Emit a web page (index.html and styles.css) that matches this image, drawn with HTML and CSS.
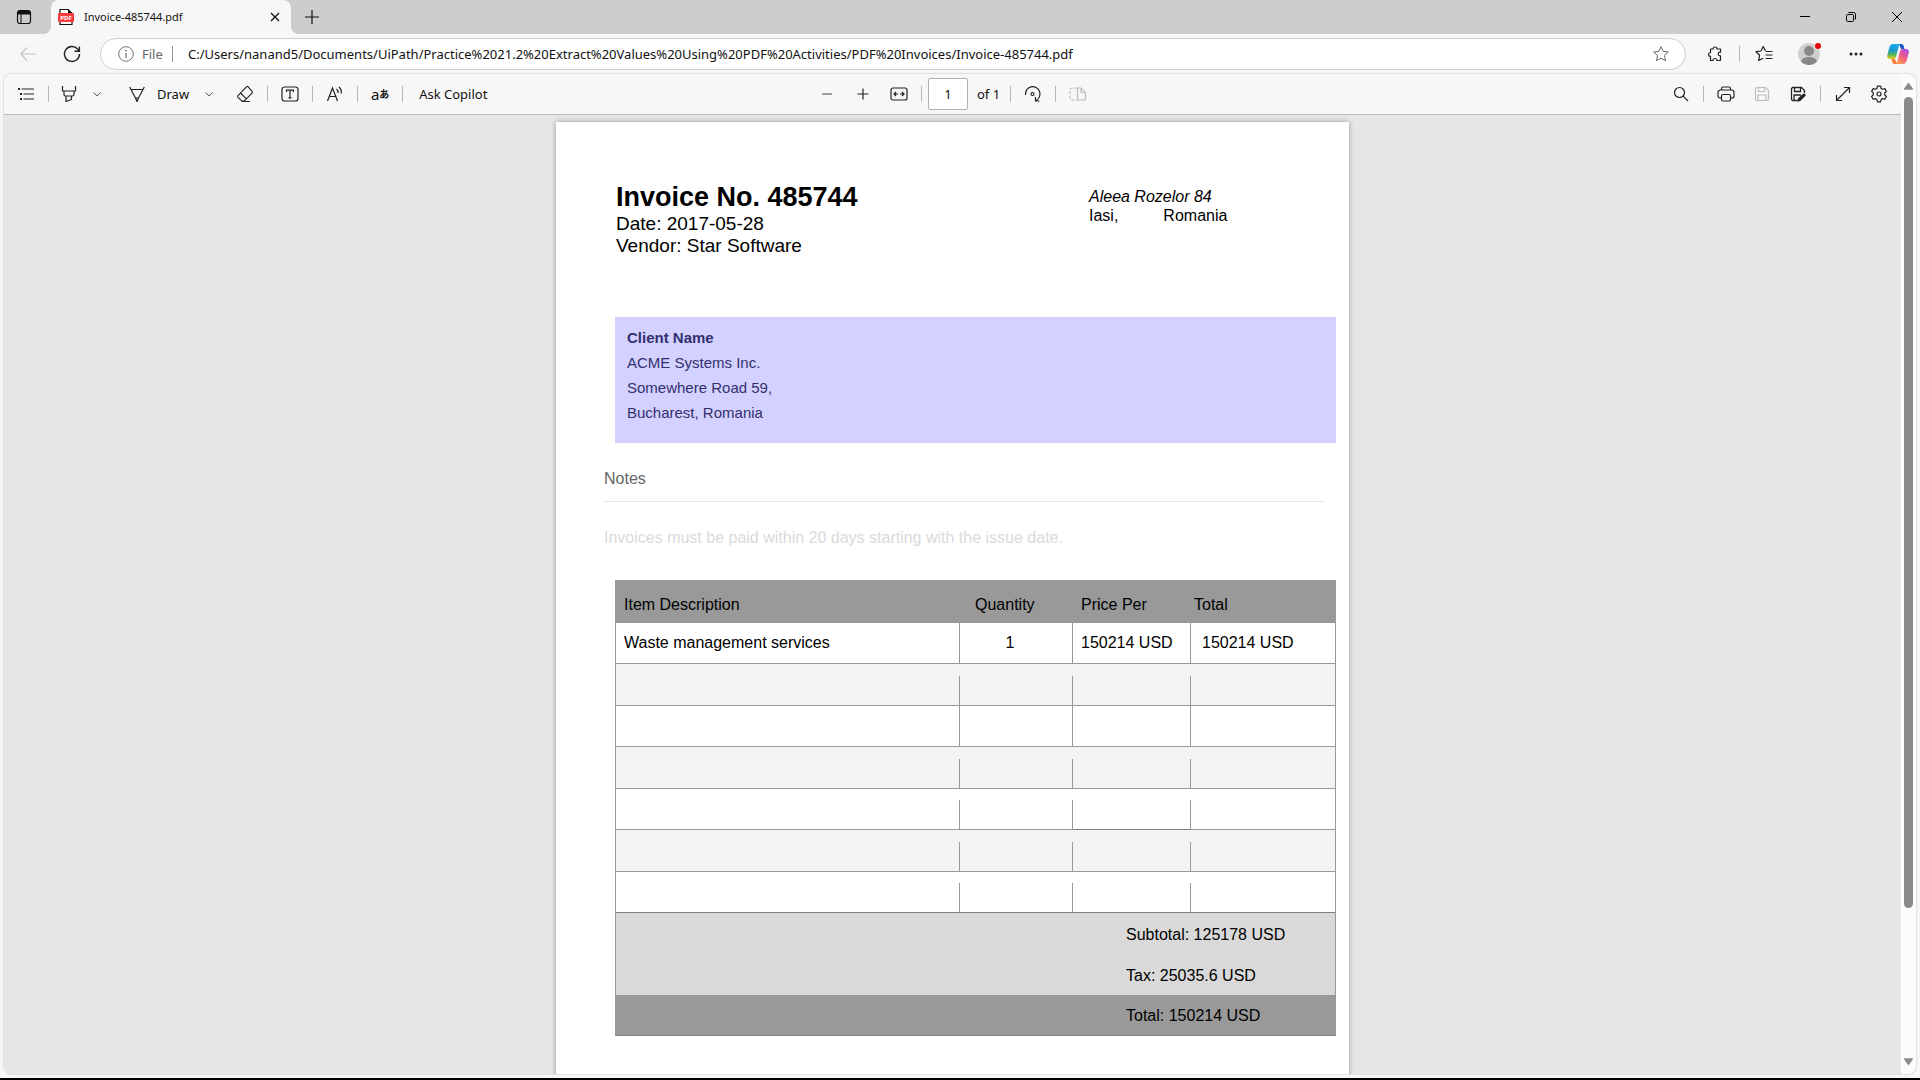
FILE: index.html
```html
<!DOCTYPE html>
<html lang="en">
<head>
<meta charset="utf-8">
<title>Invoice-485744.pdf</title>
<link rel="stylesheet" href="styles.css">
</head>
<body>
<div class="browser">
  <header class="tabstrip">
    <button class="tab-actions" aria-label="Tab actions">
      <svg width="16" height="16" viewBox="0 0 16 16"><rect x="1.5" y="1.5" width="13" height="13" rx="2.5" fill="none" stroke="#111" stroke-width="1.2"/><path d="M1.5 5.500V4A2.500 2.500 0 0 1 4 1.500h8A2.500 2.500 0 0 1 14.500 4v1.500z" fill="#111"/><path d="M5 5v9.500" stroke="#111"/></svg>
    </button>
    <div class="tab">
      <svg width="16" height="18" viewBox="0 0 16 18"><path d="M2 6V1.500h8L14 5.500V6M2 13v3.500h12V13" fill="#fff" stroke="#111" stroke-width="1.200"/><path d="M10 1v5h5z" fill="#111"/><rect x="0" y="5" width="16" height="9" rx="1" fill="#fb3b3b"/><text x="8" y="11.700" text-anchor="middle" class="pdf-badge">PDF</text></svg>
      <span class="tab-title">Invoice-485744.pdf</span>
      <button class="tab-close" aria-label="Close tab"><svg width="10" height="10" viewBox="0 0 10 10"><path d="M1 1l8 8M9 1L1 9" stroke="#111" stroke-width="1.300"/></svg></button>
    </div>
    <button class="new-tab" aria-label="New tab"><svg width="14" height="14" viewBox="0 0 14 14"><path d="M7 0v14M0 7h14" stroke="#111" stroke-width="1.200"/></svg></button>
    <div class="window-controls">
      <button aria-label="Minimize"><svg width="10" height="10" viewBox="0 0 10 10"><path d="M0 4.500h10" stroke="#000"/></svg></button>
      <button aria-label="Restore"><svg width="10" height="10" viewBox="0 0 10 10" fill="none" stroke="#000"><rect x=".5" y="2.500" width="7" height="7" rx="1.200"/><path d="M2.500.5H7.500a2 2 0 0 1 2 2V7.500"/></svg></button>
      <button aria-label="Close"><svg width="10" height="10" viewBox="0 0 10 10"><path d="M0 0l10 10M10 0L0 10" stroke="#000"/></svg></button>
    </div>
  </header>

  <nav class="navbar">
    <button class="nav-back" aria-label="Back" disabled><svg width="16" height="14" viewBox="0 0 16 14" fill="none" stroke="#c4c4c4" stroke-width="1.200"><path d="M7 .5L.8 7 7 13.500M1 7h15"/></svg></button>
    <button class="nav-reload" aria-label="Refresh"><svg width="18" height="18" viewBox="0 0 18 18" fill="none" stroke="#222" stroke-width="1.400"><path d="M16.500 9A7.500 7.500 0 1 1 14.600 4L16.300 6"/><path d="M16.400 1.500V6.300H11.500"/></svg></button>
    <div class="address">
      <svg width="16" height="16" viewBox="0 0 16 16" fill="none" stroke="#777"><circle cx="8" cy="8" r="7.300"/><path d="M8 7v5" stroke-width="1.300"/><circle cx="8" cy="4.800" r=".5" fill="#777"/></svg>
      <span class="scheme">File</span>
      <span class="address-sep"></span>
      <input class="url" type="text" aria-label="Address" value="C:/Users/nanand5/Documents/UiPath/Practice%2021.2%20Extract%20Values%20Using%20PDF%20Activities/PDF%20Invoices/Invoice-485744.pdf">
      <button class="icon-button" aria-label="Add to favorites"><svg width="16" height="16" viewBox="0 0 16 16" fill="none" stroke="#666" stroke-linejoin="round"><path d="M8 .7l2.200 4.700 5.100.6-3.800 3.500 1 5.200L8 12.200l-4.500 2.500 1-5.200L.7 6l5.100-.6z"/></svg></button>
    </div>
    <div class="nav-tools">
      <button class="icon-button" aria-label="Extensions"><svg width="16" height="16" viewBox="0 0 16 16" fill="none" stroke="#222" stroke-width="1.200" stroke-linejoin="round"><path d="M3.500 3H6a2 2 0 0 1 4 0h3.500v3.200H13a1.800 1.800 0 0 0 0 3.600h.5V14.500H10a2 2 0 0 0-4 0H3.500V10.300a1.900 1.900 0 0 1 0-3.800z"/></svg></button>
      <span class="sep"></span>
      <button class="icon-button" aria-label="Favorites"><svg width="18" height="18" viewBox="0 0 18 18" fill="none" stroke="#222" stroke-width="1.200" stroke-linejoin="round"><path d="M10.500 6L8.200 1.500 6 6l-5 .7 3.600 3.500-.9 5.300 4.500-2.300M11 6.500h6.500M10.500 10H17.500M10.500 13.500h7"/></svg></button>
      <button class="avatar" aria-label="Profile"><svg width="24" height="24" viewBox="0 0 24 24"><circle cx="11" cy="12" r="11" fill="#d2d0ce"/><circle cx="11" cy="9" r="5" fill="#8a8886"/><path d="M3 19.500c1-3.500 4-4.500 8-4.500s7 1 8 4.500a11 11 0 0 1-16 0z" fill="#8a8886"/><circle cx="20" cy="4" r="3.500" fill="#f7f7f7"/><circle cx="20" cy="4" r="3" fill="#e8000b"/></svg></button>
      <button class="icon-button" aria-label="Settings and more"><svg width="14" height="4" viewBox="0 0 14 4" fill="#222"><circle cx="2" cy="2" r="1.500"/><circle cx="7" cy="2" r="1.500"/><circle cx="12" cy="2" r="1.500"/></svg></button>
      <button class="copilot" aria-label="Copilot"><svg width="22" height="20" viewBox="0 0 22 20">
        <defs>
          <linearGradient id="cool" x1="0" y1="0" x2="0" y2="1"><stop offset="0" stop-color="#1aa9f0"/><stop offset=".4" stop-color="#189ad6"/><stop offset=".7" stop-color="#52b45c"/><stop offset="1" stop-color="#f4cc16"/></linearGradient>
          <linearGradient id="warm" x1="1" y1="0" x2=".3" y2="1"><stop offset="0" stop-color="#9a4cf5"/><stop offset=".5" stop-color="#ec5790"/><stop offset="1" stop-color="#ff9a4a"/></linearGradient>
        </defs>
        <path d="M12 0h2.500c1.300 0 1.900 1 2.300 2.400L17.500 5H14z" fill="#1854c8"/>
        <path d="M6 0h7.500c-1 .5-1.500 1.500-1.900 3L9.300 12c-.7 2.300-1.500 3-3 3H3C.8 15-.3 13.500.3 11.200L2.400 3.300C3 1.300 4 0 6 0z" fill="url(#cool)"/>
        <path d="M16 20H8.500c1-.5 1.500-1.500 1.900-3l2.300-9c.7-2.300 1.500-3 3-3H19c2.200 0 3.300 1.500 2.700 3.800l-2.100 7.900C19 18.700 18 20 16 20z" fill="url(#warm)"/>
        <path d="M10 20H7.500c-1.300 0-1.900-1-2.300-2.400L4.500 15H8z" fill="#f57a3c"/>
      </svg></button>
    </div>
  </nav>

  <main class="viewer">
    <div class="viewer-main">
      <div class="toolbar">
        <div class="group group-left">
          <button class="icon-button" aria-label="Contents"><svg width="18" height="14" viewBox="0 0 18 14" fill="none" stroke="#222" stroke-width="1.200"><path d="M4.500 2H17M6.500 7H17M6.500 12H17"/><path d="M1 2h2M3 7h2M3 12h2" stroke-width="2"/></svg></button>
          <span class="sep"></span>
          <button class="icon-button narrow" aria-label="Highlight"><svg width="16" height="18" viewBox="0 0 16 18" fill="none" stroke="#222" stroke-width="1.200" stroke-linejoin="round"><path d="M1.500 1v5h13V1M3 6v3.500c0 1 .5 1.500 1.500 1.500h7c1 0 1.500-.5 1.500-1.500V6M5 11v5.500l5.500-2V11"/></svg></button>
          <button class="icon-button narrow" aria-label="Highlight colors"><svg width="8" height="5" viewBox="0 0 8 5" fill="none" stroke="#555"><path d="M.5.5L4 4 7.500.5"/></svg></button>
          <button class="draw" type="button"><svg width="16" height="16" viewBox="0 0 16 16" fill="none" stroke="#222" stroke-width="1.200" stroke-linejoin="round"><path d="M.7 1L2 3.500h12L15.300 1M2 3.500L6.500 12h3L14 3.500M6.500 12L8 15.500 9.500 12"/></svg><span>Draw</span></button>
          <button class="icon-button narrow" aria-label="Draw options"><svg width="8" height="5" viewBox="0 0 8 5" fill="none" stroke="#555"><path d="M.5.5L4 4 7.500.5"/></svg></button>
          <button class="icon-button eraser" aria-label="Erase"><svg width="18" height="18" viewBox="0 0 18 18" fill="none" stroke="#222" stroke-width="1.100" stroke-linejoin="round"><path d="M10.700 1.700L1.800 10.800a1 1 0 0 0 0 1.300l4 4h2.400l8-8.200a1 1 0 0 0 0-1.300L12 1.700a1 1 0 0 0-1.300 0zM4.500 8l5.800 5.800M6 16.500h8"/></svg></button>
          <span class="sep"></span>
          <button class="icon-button" aria-label="Add text"><svg width="18" height="16" viewBox="0 0 18 16" fill="none" stroke="#222" stroke-width="1.200"><rect x="1" y="1" width="16" height="14" rx="2.500"/><path d="M5.500 6V4.200h7V6M9 4.200v7.600M7.500 11.800h3"/></svg></button>
          <span class="sep"></span>
          <button class="icon-button" aria-label="Read aloud"><svg width="18" height="16" viewBox="0 0 18 16" fill="none" stroke="#222" stroke-width="1.200"><path d="M1.500 15L6.500 2l5 13M3.300 10.500h6.500M10.500 3a4 4 0 0 1 1.500 4M13 1a7 7 0 0 1 2.200 6.500"/></svg></button>
          <span class="sep"></span>
          <button class="icon-button translate" aria-label="Translate"><span>a</span><span class="kana">あ</span></button>
          <span class="sep"></span>
          <button class="ask" type="button">Ask Copilot</button>
        </div>
        <div class="group group-center">
          <button class="icon-button" aria-label="Zoom out"><svg width="12" height="12" viewBox="0 0 12 12"><path d="M1 6h10" stroke="#444" stroke-width="1.200"/></svg></button>
          <button class="icon-button spaced" aria-label="Zoom in"><svg width="12" height="12" viewBox="0 0 12 12"><path d="M.5 6h11M6 .5v11" stroke="#222" stroke-width="1.200"/></svg></button>
          <button class="icon-button spaced" aria-label="Fit to width"><svg width="18" height="14" viewBox="0 0 18 14" fill="none" stroke="#222" stroke-width="1.200"><rect x="1" y="1" width="16" height="12" rx="2"/><path d="M8 7H4M6 5L4 7l2 2M10 7h4M12 5l2 2-2 2"/></svg></button>
          <span class="sep"></span>
          <input class="page-number" id="page-number" type="text" value="1">
          <label class="page-count" for="page-number">of 1</label>
          <span class="sep"></span>
          <button class="icon-button" aria-label="Rotate"><svg width="18" height="18" viewBox="0 0 18 18" fill="none" stroke="#222" stroke-width="1.200"><path d="M1.500 10A7.300 7.300 0 1 1 12 15.500M15.500 16H11.500V12"/><circle cx="8.500" cy="9" r="1.500"/></svg></button>
          <span class="sep"></span>
          <button class="icon-button" aria-label="Page view" disabled><svg width="18" height="14" viewBox="0 0 18 14" fill="none" stroke="#bdbdbd" stroke-width="1.200"><path d="M8 1H3a2 2 0 0 0-2 2v8a2 2 0 0 0 2 2h5" stroke-dasharray="3 1.500"/><path d="M8.500 1H12l4.500 4.500V11a2 2 0 0 1-2 2h-6zM12 1v4.500h4.500"/></svg></button>
        </div>
        <div class="group group-right">
          <button class="icon-button" aria-label="Search"><svg width="16" height="16" viewBox="0 0 16 16" fill="none" stroke="#222" stroke-width="1.200"><circle cx="6.500" cy="6.500" r="5"/><path d="M10.200 10.200l4.800 4.800"/></svg></button>
          <span class="sep"></span>
          <button class="icon-button" aria-label="Print"><svg width="18" height="16" viewBox="0 0 18 16" fill="none" stroke="#222" stroke-width="1.200"><path d="M4.500 4V2.500A1.500 1.500 0 0 1 6 1h6a1.500 1.500 0 0 1 1.500 1.500V4M4.500 12H3a2 2 0 0 1-2-2V6.500A2.500 2.500 0 0 1 3.500 4h11A2.500 2.500 0 0 1 17 6.500V10a2 2 0 0 1-2 2h-1.500"/><rect x="4.500" y="8.500" width="9" height="6.500" rx="1.500"/></svg></button>
          <button class="icon-button spaced" aria-label="Save" disabled><svg width="16" height="16" viewBox="0 0 16 16" fill="none" stroke="#bdbdbd" stroke-width="1.200"><path d="M3 1.500h8.500l3 3V13a1.500 1.500 0 0 1-1.500 1.500H3A1.500 1.500 0 0 1 1.500 13V3A1.500 1.500 0 0 1 3 1.500zM4.500 1.500V5.500h6v-4M4 14.500V9h8v5.500"/></svg></button>
          <button class="icon-button spaced" aria-label="Save as"><svg width="16" height="16" viewBox="0 0 16 16" fill="none" stroke="#222" stroke-width="1.300"><path d="M7 14.500H3A1.500 1.500 0 0 1 1.500 13V3A1.500 1.500 0 0 1 3 1.500h8.500l3 3V7M4.500 1.500V5.500h6v-4M4 14.500V9h7"/><path d="M7 15.800l.8-3.300 5-4.500a1.400 1.400 0 0 1 2.300 2.300l-4.800 4.600z" fill="#222" stroke="none"/></svg></button>
          <span class="sep"></span>
          <button class="icon-button" aria-label="Full screen"><svg width="16" height="16" viewBox="0 0 16 16" fill="none" stroke="#222" stroke-width="1.200"><path d="M1.500 14.500l13-13M9 1.500h5.500V7M1.500 9v5.500H7"/></svg></button>
          <button class="icon-button spaced" aria-label="Settings"><svg width="18" height="18" viewBox="0 0 18 18" fill="none" stroke="#222" stroke-width="1.200" stroke-linejoin="round"><path d="M7.400 1.200h3.200l.5 2.300 1.400.8 2.300-.7 1.600 2.800-1.700 1.600v1.900l1.700 1.600-1.600 2.800-2.300-.7-1.400.8-.5 2.400H7.400l-.5-2.400-1.400-.8-2.300.7-1.600-2.800 1.700-1.600V8L1.600 6.400l1.600-2.800 2.300.7 1.400-.8z"/><circle cx="9" cy="9" r="2"/></svg></button>
        </div>
      </div>

      <div class="canvas">
        <article class="sheet">
          <header class="invoice-head">
            <div>
              <h1 class="invoice-title">Invoice No. 485744</h1>
              <p class="invoice-meta">Date: 2017-05-28</p>
              <p class="invoice-meta">Vendor: Star Software</p>
            </div>
            <address class="vendor-address">
              <em>Aleea Rozelor 84</em>
              <div class="city-line"><span>Iasi,</span><span>Romania</span></div>
            </address>
          </header>

          <section class="client">
            <h2 class="client-title">Client Name</h2>
            <p>ACME Systems Inc.</p>
            <p>Somewhere Road 59,</p>
            <p>Bucharest, Romania</p>
          </section>

          <section class="notes">
            <h2 class="notes-title">Notes</h2>
            <p class="notes-text">Invoices must be paid within 20 days starting with the issue date.</p>
          </section>

          <table class="items">
            <colgroup><col class="col-item"><col class="col-qty"><col class="col-price"><col class="col-total"></colgroup>
            <thead>
              <tr><th>Item Description</th><th class="qty-head">Quantity</th><th>Price Per</th><th class="total-head">Total</th></tr>
            </thead>
            <tbody>
              <tr class="full"><td>Waste management services</td><td class="qty">1</td><td>150214 USD</td><td class="amount">150214 USD</td></tr>
              <tr class="shade"><td></td><td></td><td></td><td></td></tr>
              <tr class="full"><td></td><td></td><td></td><td></td></tr>
              <tr class="shade"><td></td><td></td><td></td><td></td></tr>
              <tr><td></td><td></td><td class="ruled"></td><td></td></tr>
              <tr class="shade"><td></td><td></td><td></td><td></td></tr>
              <tr class="last"><td></td><td></td><td></td><td></td></tr>
            </tbody>
            <tfoot>
              <tr><td colspan="2"></td><td colspan="2" class="sum">Subtotal: 125178 USD</td></tr>
              <tr><td colspan="2"></td><td colspan="2" class="sum">Tax: 25035.6 USD</td></tr>
              <tr class="grand"><td colspan="2"></td><td colspan="2" class="sum">Total: 150214 USD</td></tr>
            </tfoot>
          </table>
        </article>
      </div>
    </div>

    <div class="scrollbar">
      <svg width="9" height="8" viewBox="0 0 9 8" fill="#8a8a8a"><path d="M4.500 0.500L8.800 6.500a.8.8 0 0 1-.7 1.300H.9a.8.8 0 0 1-.7-1.300z"/></svg>
      <div class="track"><div class="thumb"></div></div>
      <svg width="9" height="8" viewBox="0 0 9 8" fill="#8a8a8a"><path d="M4.500 7.500L.2 1.500A.8.8 0 0 1 .9.200h7.200a.8.8 0 0 1 .7 1.300z"/></svg>
    </div>
  </main>
</div>
</body>
</html>
```

FILE: styles.css
```css
* { box-sizing: border-box; }

body {
  margin: 0;
  font: 13px/20px "Noto Sans", "Open Sans", sans-serif;
  color: #111;
}

h1, h2, p { margin: 0; font-weight: normal; }

button {
  display: flex;
  align-items: center;
  justify-content: center;
  flex: none;
  margin: 0;
  padding: 0;
  border: 0;
  background: none;
  color: inherit;
  font: inherit;
}

input { margin: 0; font: inherit; color: inherit; }

svg { display: block; flex: none; }

.browser {
  display: flex;
  flex-direction: column;
  height: 100vh;
  overflow: hidden;
  background: #f7f7f7;
  border-bottom: 2px solid #000;
}

/* Tab strip */
.tabstrip {
  display: flex;
  flex: none;
  height: 34px;
  background: #cdcdcd;
}

.tab-actions { width: 51px; padding-right: 3px; }

.tab {
  position: relative;
  display: flex;
  align-items: center;
  width: 240px;
  padding: 0 11px 0 7px;
  gap: 10px;
  background: #f7f7f7;
  border-radius: 8px 8px 0 0;
}

.tab::before,
.tab::after {
  content: "";
  position: absolute;
  bottom: 0;
  width: 8px;
  height: 8px;
}

.tab::before { left: -8px; background: radial-gradient(circle at 0 0, #cdcdcd 8px, #f7f7f7 8px); }
.tab::after { right: -8px; background: radial-gradient(circle at 100% 0, #cdcdcd 8px, #f7f7f7 8px); }

.pdf-badge { font: bold 6px "Noto Sans", sans-serif; fill: #fff; }
.tab-title { flex: 1; font-size: 11px; }
.new-tab { width: 42px; }
.window-controls { display: flex; margin-left: auto; }
.window-controls button { width: 46px; padding-bottom: 1px; }

/* Address row */
.navbar {
  display: flex;
  align-items: center;
  flex: none;
  height: 40px;
  padding-right: 11px;
}

.nav-back { width: 44px; padding-left: 12px; }
.nav-reload { width: 56px; }

.address {
  display: flex;
  align-items: center;
  flex: 1;
  height: 32px;
  padding: 0 14px 0 17px;
  background: #fff;
  border: 1px solid #cfcfcf;
  border-radius: 16px;
}

.scheme { width: 30px; margin-left: 8px; color: #666; }
.address-sep { width: 1px; height: 16px; background: #999; }
.url { flex: 1; min-width: 0; margin-left: 15px; padding: 0; border: 0; outline: 0; background: none; }

.nav-tools { display: flex; align-items: center; gap: 14px; padding-left: 19px; }
.avatar { width: 24px; margin-left: 10px; }
.nav-tools .avatar + .icon-button { margin: 0 7px 0 10px; }
.copilot { width: 22px; }

.icon-button { width: 20px; height: 24px; }
.icon-button.narrow { width: 16px; }
.sep { flex: none; width: 1px; height: 16px; background: #b5b5b5; }

/* PDF viewer panel */
.viewer {
  display: flex;
  flex: 1;
  min-height: 0;
  margin: 0 4px 4px;
  overflow: hidden;
  background: #fcfcfc;
  border-radius: 8px;
  box-shadow: 0 0 2px rgba(0, 0, 0, .3);
}

.viewer-main { display: flex; flex: 1; flex-direction: column; min-width: 0; }

.toolbar {
  display: grid;
  grid-template-columns: 1fr auto 1fr;
  flex: none;
  height: 41px;
  background: #f7f7f7;
  border-bottom: 1px solid #bcbcbc;
}

.group { display: flex; align-items: center; gap: 12px; }
.group-left { padding-left: 12px; }
.group-right { justify-content: flex-end; padding-right: 12px; }
.spaced { margin-left: 4px; }
.draw { gap: 12px; margin-left: 12px; }
.eraser { margin-left: 6px; }
.ask { margin-left: 4px; }
.translate { font-size: 15px; }
.translate .kana { font: bold 10px/20px "Noto Sans CJK JP", sans-serif; }

.page-number {
  width: 40px;
  height: 32px;
  margin: 0 -3px 0 -6px;
  padding: 0;
  border: 1px solid #b0b0b0;
  border-radius: 2px;
  background: #fff;
  text-align: center;
}
.page-count { margin-right: -2px; }

/* Document */
.canvas { flex: 1; min-height: 0; overflow: hidden; padding-top: 7px; background: #e6e6e6; }

.sheet {
  max-width: 793px;
  min-height: 1122px;
  margin: 0 auto;
  padding-top: 60px;
  background: #fff;
  box-shadow: 0 0 5px rgba(0, 0, 0, .35);
  font-family: "Liberation Sans", Arial, sans-serif;
  font-size: 16px;
  color: #000;
}

.invoice-head { display: flex; justify-content: space-between; margin: 0 138px 60px 60px; }
.invoice-title { padding-bottom: 1px; font-size: 27px; line-height: 30px; font-weight: bold; }
.invoice-meta { font-size: 19px; line-height: 22px; }
.vendor-address { width: 122px; padding-top: 5px; font-style: normal; line-height: 19px; white-space: nowrap; }
.city-line { display: flex; gap: 45px; }

.client {
  height: 126px;
  margin: 0 13px 0 59px;
  padding: 8px 12px;
  background: #d3d1ff;
  color: #333070;
  font-size: 15px;
  line-height: 25px;
}

.client-title { font-size: 15px; font-weight: bold; }

.notes { margin: 24px 24px 0 47px; }
.notes-title {
  padding: 0 1px 10px;
  border-bottom: 1px solid #e8e8e0;
  color: #666;
  font-size: 16px;
  line-height: 24px;
}
.notes-text { padding: 26px 1px 0; color: #dadada; line-height: 20px; }

.items {
  width: 721px;
  margin: 32px 13px 0 59px;
  border-spacing: 0;
  table-layout: fixed;
  border: 1px solid #999;
  border-top: 0;
  border-bottom-color: #808080;
}

.col-item { width: 344px; }
.col-qty { width: 113px; }
.col-price { width: 118px; }

.items th,
.items td { height: 41px; padding: 0 8px; text-align: left; font-weight: normal; }
.items th { height: 43px; padding-top: 6px; background: #999; }
.items .qty-head { padding-left: 15px; }
.items .total-head { padding-left: 3px; }
.items .qty { padding-right: 21px; text-align: center; }
.items .amount { padding-left: 11px; }

/* Column rules stop short of the row above, except in full rows */
.items tbody td {
  border-bottom: 1px solid #999;
  background: linear-gradient(#999, #999) right bottom / 1px 29px no-repeat;
}
.items tbody .full td { background-size: 1px 100%; }
.items tbody .shade td { height: 42px; background-color: #f3f3f3; }
.items tbody td:last-child { background-image: none; }
.items tbody .ruled,
.items tbody .last td { border-bottom-color: #808080; }

.items tfoot td { padding-top: 2px; background: #d9d9d9; }
.items tfoot .sum { padding-left: 53px; }
.items tfoot .grand td { height: 40px; background: #999; }

/* Scroll bar */
.scrollbar {
  display: flex;
  flex-direction: column;
  align-items: center;
  flex: none;
  width: 15px;
  padding: 8px 0;
}

.track { flex: 1; width: 9px; margin: 7px 0; }
.thumb { height: 85%; background: #8a8a8a; border-radius: 5px; }
```
